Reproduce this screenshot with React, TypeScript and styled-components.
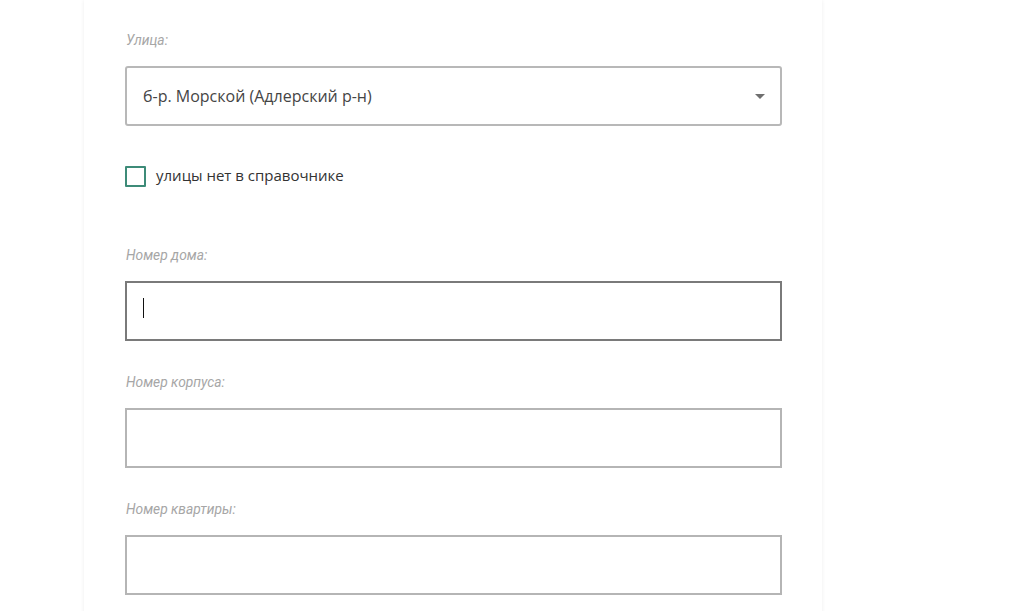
import { createGlobalStyle, styled } from 'styled-components';

const GlobalStyle = createGlobalStyle`
    body {
        margin: 0;
        background: #ffffff;
        font-family: "Open Sans", "Liberation Sans", sans-serif;
    }
`;

const Page = styled.div`
    width: 1036px;
    height: 611px;
    overflow: hidden;
`;

const Card = styled.div`
    margin-left: 84px;
    width: 738px;
    min-height: 640px;
    box-sizing: border-box;
    padding: 31px 40px 0 41px;
    background: #ffffff;
    box-shadow: 0 0 4px rgba(0, 0, 0, 0.07);
`;

const Field = styled.div<{ $last?: boolean }>`
    display: flex;
    flex-direction: column;
    margin-bottom: ${(p) => (p.$last ? '0' : '32px')};
`;

const Label = styled.label`
    font-family: Roboto, "Liberation Sans", sans-serif;
    font-style: italic;
    font-size: 13.8px;
    line-height: 18px;
    color: #a6a6a6;
    margin-bottom: 17px;
    padding-left: 1px;
`;

const SelectBox = styled.div`
    display: flex;
    align-items: center;
    justify-content: space-between;
    width: 657px;
    height: 60px;
    box-sizing: border-box;
    padding: 0 15px 0 16px;
    border: 2px solid #b8b8b8;
    border-radius: 3px;
    font-size: 16px;
    color: #454545;
`;

const CheckRow = styled.label`
    display: flex;
    align-items: center;
    gap: 10px;
    height: 21px;
    margin: 40px 0 59px;
    font-size: 15px;
    line-height: 20px;
    color: #333333;
`;

const CheckText = styled.span`
    padding-bottom: 3px;
`;

const Box = styled.span`
    flex: none;
    width: 21px;
    height: 21px;
    box-sizing: border-box;
    border: 2px solid #3d8b78;
    border-radius: 1px;
`;

const InputWrap = styled.div`
    position: relative;
    width: 657px;
`;

const Input = styled.input<{ $focused?: boolean }>`
    display: block;
    width: 100%;
    height: 60px;
    box-sizing: border-box;
    padding: 0 17px;
    border: 2px solid ${(p) => (p.$focused ? '#7a7a7a' : '#b5b5b5')};
    border-radius: 0;
    outline: none;
    font-family: "Open Sans", "Liberation Sans", sans-serif;
    font-size: 16px;
    color: #454545;
    caret-color: transparent;
    background: #ffffff;
`;

const Caret = styled.span`
    position: absolute;
    left: 18px;
    top: 17px;
    width: 1px;
    height: 20px;
    background: #111111;
`;

function Arrow() {
    return (
        <svg width="10" height="5" viewBox="0 0 10 5">
            <path d="M0 0 L10 0 L5 5 Z" fill="#6f6f6f" />
        </svg>
    );
}

export default function App() {
    return (
        <Page>
            <GlobalStyle />
            <Card>
                <Field $last>
                    <Label>Улица:</Label>
                    <SelectBox>
                        <span>б-р. Морской (Адлерский р-н)</span>
                        <Arrow />
                    </SelectBox>
                </Field>

                <CheckRow>
                    <Box />
                    <CheckText>улицы нет в справочнике</CheckText>
                </CheckRow>

                <Field>
                    <Label>Номер дома:</Label>
                    <InputWrap>
                        <Input $focused />
                        <Caret />
                    </InputWrap>
                </Field>

                <Field>
                    <Label>Номер корпуса:</Label>
                    <InputWrap>
                        <Input />
                    </InputWrap>
                </Field>

                <Field $last>
                    <Label>Номер квартиры:</Label>
                    <InputWrap>
                        <Input />
                    </InputWrap>
                </Field>
            </Card>
        </Page>
    );
}
